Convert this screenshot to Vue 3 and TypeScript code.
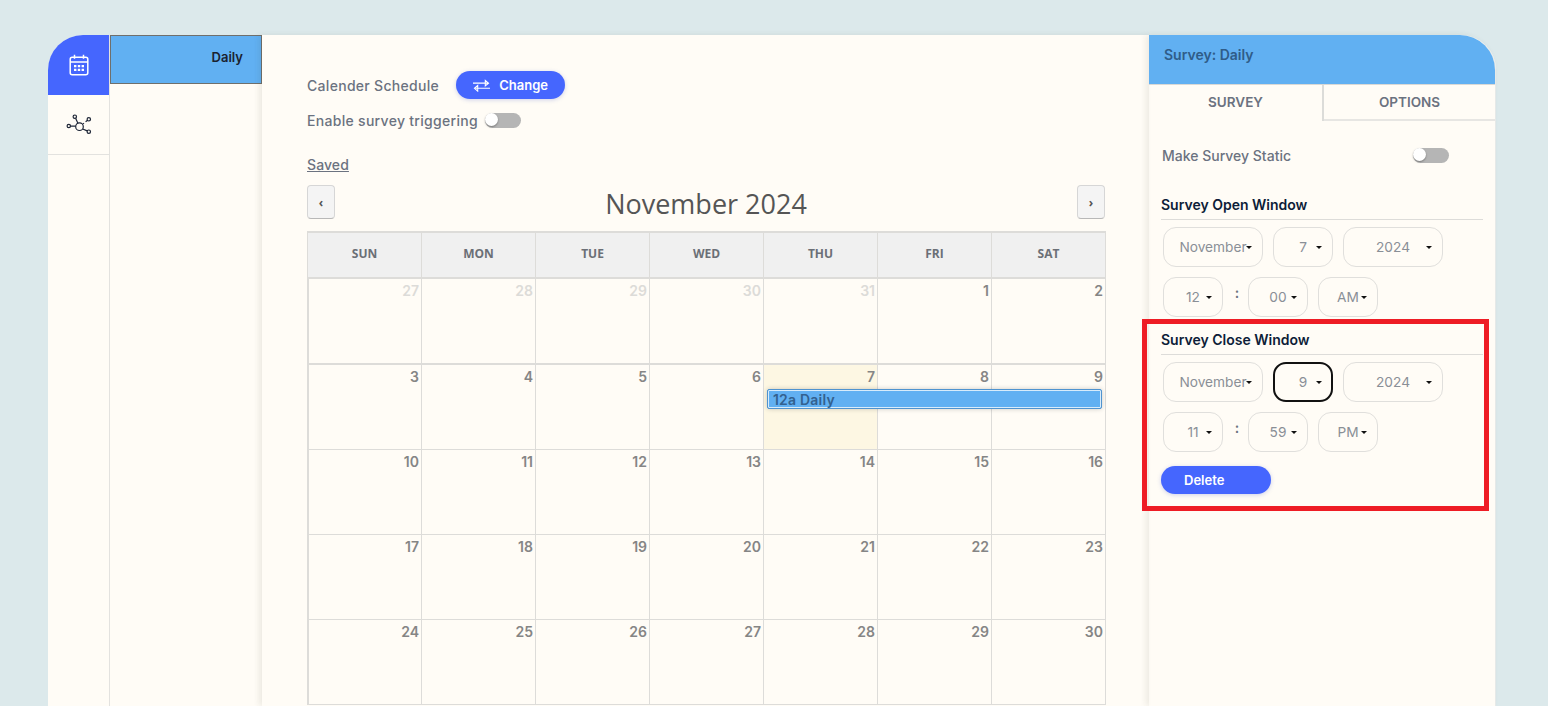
<script setup lang="ts">
const weekDays = ['SUN', 'MON', 'TUE', 'WED', 'THU', 'FRI', 'SAT']
interface Day { n: number; muted?: boolean; today?: boolean }
const first: Day[] = [27, 28, 29, 30, 31].map((n) => ({ n, muted: true }))
const rest: Day[] = Array.from({ length: 30 }, (_, i) => ({ n: i + 1, today: i + 1 === 7 }))
const days = [...first, ...rest]
const weeks: Day[][] = []
for (let i = 0; i < days.length; i += 7) weeks.push(days.slice(i, i + 7))

interface Win { title: string; date: { label: string; cls: string; focus?: boolean }[]; hour: string; minute: string; ampm: string }
const windows: Win[] = [
  { title: 'Survey Open Window', date: [{ label: 'November', cls: 'wide' }, { label: '7', cls: 'narrow' }, { label: '2024', cls: 'wide' }], hour: '12', minute: '00', ampm: 'AM' },
  { title: 'Survey Close Window', date: [{ label: 'November', cls: 'wide' }, { label: '9', cls: 'narrow', focus: true }, { label: '2024', cls: 'wide' }], hour: '11', minute: '59', ampm: 'PM' },
]
</script>

<template>
  <div class="page">
    <div class="shell">
      <nav class="rail">
        <div class="rail-item active">
          <svg width="20" height="22" viewBox="0 0 20 22" fill="none" stroke="#fff" stroke-width="1.5">
            <rect x="1.2" y="3.2" width="17.6" height="17.6" rx="2" />
            <path d="M1.2 8h17.6M5.5 .8v4M14.5 .8v4" />
            <path d="M5 11h2.4v2.2H5zM8.8 11h2.4v2.2H8.800zM12.600 11H15v2.200h-2.400zM5 14.800h2.400V17H5zM8.800 14.800h2.400V17H8.800zM12.600 14.800H15V17h-2.400z" fill="#fff" stroke="none" />
          </svg>
        </div>
        <div class="rail-item">
          <svg width="26" height="22" viewBox="0 0 26 22" fill="none" stroke="#1d2536" stroke-width="1.200">
            <circle cx="13.500" cy="12.700" r="3.800" />
            <circle cx="8.800" cy="2.700" r="1.700" />
            <circle cx="22.800" cy="5.300" r="1.700" />
            <circle cx="2.800" cy="12" r="1.700" />
            <circle cx="22.800" cy="17.700" r="1.700" />
            <path d="M9.600 4.300l2.300 5M4.600 12.100h5.100M16.600 15l4.700 1.900M17 9.900l1-.8M19.600 7.800l1.700-1.200" />
          </svg>
        </div>
      </nav>

      <aside class="list">
        <div class="list-item">Daily</div>
      </aside>

      <main class="main">
        <div class="line first-line">
          <span class="label">Calender Schedule</span>
          <button class="pill change">
            <svg width="17" height="13" viewBox="0 0 18 13" fill="none" stroke="#fff" stroke-width="1.100">
              <path d="M0 4h15.500M13 1v6l3.500-3zM18 9.500H2.500M5 6.500v6l-3.500-3z" />
            </svg>
            Change
          </button>
        </div>
        <div class="line second-line">
          <span class="label">Enable survey triggering</span>
          <span class="toggle"><i></i></span>
        </div>
        <a class="saved">Saved</a>

        <div class="cal-head">
          <button class="nav-btn">‹</button>
          <h2>November 2024</h2>
          <button class="nav-btn">›</button>
        </div>

        <div class="calendar">
          <div class="week-head">
            <div v-for="d in weekDays" :key="d" class="wd">{{ d }}</div>
          </div>
          <div v-for="(w, wi) in weeks" :key="wi" class="week" :class="{ thick: wi === 0 }">
            <div v-for="d in w" :key="d.n + (d.muted ? 'm' : '')" class="day" :class="{ today: d.today }">
              <span class="num" :class="{ muted: d.muted }">{{ d.n }}</span>
            </div>
            <div v-if="wi === 1" class="event"><span>12a Daily</span></div>
          </div>
        </div>
      </main>

      <section class="side">
        <header class="side-head">Survey: Daily</header>
        <div class="tabs">
          <div class="tab current">SURVEY</div>
          <div class="tab">OPTIONS</div>
        </div>
        <div class="side-body">
          <div class="static-row">
            <span class="label tight">Make Survey Static</span>
            <span class="toggle"><i></i></span>
          </div>
          <div v-for="win in windows" :key="win.title" class="window">
            <h3>{{ win.title }}</h3>
            <div class="sel-row">
              <div v-for="(s, i) in win.date" :key="i" class="sel" :class="[s.cls, { focus: s.focus }]">{{ s.label }}<b></b></div>
            </div>
            <div class="sel-row time">
              <div class="sel narrow">{{ win.hour }}<b></b></div>
              <span class="colon">:</span>
              <div class="sel narrow">{{ win.minute }}<b></b></div>
              <div class="sel narrow">{{ win.ampm }}<b></b></div>
            </div>
          </div>
          <button class="pill delete">Delete</button>
        </div>
        <div class="highlight"></div>
      </section>
    </div>
  </div>
</template>

<style>
html, body { margin: 0; background: #dce9eb; }
</style>

<style scoped>
.page {
  height: 706px;
  box-sizing: border-box;
  padding: 35px 52px 0 48px;
  overflow: hidden;
  background: #dce9eb;
  font-family: Inter, "Liberation Sans", sans-serif;
}
.shell {
  display: flex;
  height: 671px;
  background: #fffcf6;
  border-radius: 35px 35px 0 0;
}
.rail {
  width: 62px;
  flex: none;
  box-sizing: border-box;
  border-right: 1px solid #e3e2df;
}
.rail-item {
  height: 59px;
  display: flex;
  align-items: center;
  justify-content: center;
  border-bottom: 1px solid #e3e2df;
}
.rail-item.active {
  height: 60px;
  background: #4566fe;
  border-bottom: 0;
  border-top-left-radius: 35px;
}
.list {
  width: 152px;
  flex: none;
}
.list-item {
  height: 49px;
  box-sizing: border-box;
  border: 1px solid #6f6f6c;
  background: #61b0f2;
  padding: 13px 18px 0 0;
  text-align: right;
  font-size: 13px;
  font-weight: 600;
  line-height: 17px;
  color: #1a2230;
}
.main {
  width: 887px;
  flex: none;
  box-sizing: border-box;
  padding: 36px 43px 0 45px;
  box-shadow: -3px 0 6px rgba(60, 50, 30, 0.09);
  position: relative;
}
.line { display: flex; align-items: center; }
.first-line { height: 28px; gap: 17px; }
.second-line { height: 20px; margin-top: 11px; gap: 7px; }
.label {
  font-size: 14px;
  font-weight: 500;
  letter-spacing: 0.3px;
  color: #6b7280;
  white-space: nowrap;
}
.label.tight { letter-spacing: 0; }
.pill {
  border: 0;
  border-radius: 14px;
  height: 28px;
  background: #4566fe;
  color: #fff;
  font: 600 13px Inter, "Liberation Sans", sans-serif;
  box-shadow: 0 1px 4px rgba(60, 80, 200, 0.25);
}
.change {
  width: 109px;
  display: flex;
  align-items: center;
  justify-content: center;
  gap: 9px;
  padding: 0;
}
.toggle {
  position: relative;
  display: inline-block;
  width: 36px;
  height: 15px;
  border-radius: 8px;
  background: #b5b5b5;
  flex: none;
}
.toggle i {
  position: absolute;
  left: 0;
  top: 0;
  width: 13px;
  height: 13px;
  border-radius: 50%;
  background: #fff;
  box-shadow: 0 1px 2px rgba(0, 0, 0, 0.35);
}
.saved {
  display: block;
  width: max-content;
  margin-top: 26px;
  font-size: 14px;
  line-height: 18px;
  font-weight: 500;
  letter-spacing: 0.1px;
  color: #6b7280;
  text-decoration: underline;
}
.cal-head {
  display: flex;
  align-items: center;
  justify-content: space-between;
  margin-top: 11px;
  height: 34px;
  padding-right: 1px;
}
.cal-head h2 {
  margin: 0;
  padding-top: 2px;
  font: 400 27px "Open Sans", sans-serif;
  color: #555;
}
.nav-btn {
  width: 28px;
  height: 34px;
  padding: 0;
  border: 1px solid #d6d6d6;
  border-bottom-color: #b8b8b8;
  border-radius: 4px;
  background: #f4f4f4;
  color: #555;
  font: 700 12px "Open Sans", sans-serif;
}
.calendar {
  margin-top: 12px;
  width: 799px;
  box-sizing: border-box;
  border-left: 2px solid #dddcd9;
  border-right: 1px solid #dddcd9;
}
.week-head {
  display: grid;
  grid-template-columns: repeat(6, 114px) 113px;
  height: 48px;
  box-sizing: border-box;
  margin-left: -1px;
  border-top: 2px solid #dddcd9;
  border-bottom: 2px solid #dddcd9;
  background: #f0f0f0;
}
.wd {
  display: flex;
  align-items: center;
  justify-content: center;
  padding-bottom: 3px;
  font: 700 12px "Open Sans", sans-serif;
  color: #6b6f76;
  border-right: 1px solid #dddcd9;
}
.wd:last-child { border-right: 0; }
.week {
  position: relative;
  display: grid;
  grid-template-columns: 113px repeat(5, 114px) 113px;
  height: 85px;
  box-sizing: border-box;
  border-bottom: 1px solid #dddcd9;
}
.week.thick { height: 86px; border-bottom-width: 2px; }
.day {
  box-sizing: border-box;
  border-right: 1px solid #dddcd9;
  padding: 1px 2px 0 0;
  text-align: right;
}
.day:nth-child(7) { border-right: 0; }
.day.today { background: #fdf7e3; }
.num {
  font-size: 14px;
  line-height: 18px;
  font-weight: 600;
  color: #858585;
}
.num.muted { color: #dcdbd8; }
.event {
  position: absolute;
  left: 458px;
  top: 24px;
  width: 335px;
  height: 20px;
  box-sizing: border-box;
  border: 1px solid #4f93cf;
  border-radius: 2px;
  background: #61b0f2;
  box-shadow: inset 0 0 0 1px #d8ecfb, 0 0 5px rgba(0, 0, 0, 0.2);
  padding-left: 5px;
  font-size: 14px;
  letter-spacing: 0.2px;
  line-height: 20px;
  font-weight: 600;
  color: #33618f;
  overflow: hidden;
}
.side {
  position: relative;
  flex: 1;
  min-width: 0;
  border-radius: 0 35px 0 0;
  box-shadow: -3px 0 6px rgba(60, 50, 30, 0.09);
  border-right: 1px solid #e6e9e8;
}
.side-head {
  height: 49px;
  box-sizing: border-box;
  background: #61b0f2;
  border-radius: 0 35px 0 0;
  padding: 11px 15px 0;
  font-size: 14px;
  line-height: 17px;
  font-weight: 600;
  color: #2f5c88;
}
.tabs {
  display: flex;
  height: 37px;
  border-top: 1px solid #d9d9d6;
  box-sizing: border-box;
}
.tab {
  flex: 1;
  display: flex;
  align-items: center;
  justify-content: center;
  font-size: 13.500px;
  font-weight: 600;
  color: #6b7280;
  border-bottom: 2px solid #e7e6e3;
}
.tab.current {
  width: 173px;
  flex: none;
  border-bottom: 0;
  padding-bottom: 2px;
  border-right: 2px solid #dcdcd9;
}
.side-body { padding: 0 12px; }
.static-row {
  display: flex;
  align-items: center;
  justify-content: space-between;
  height: 20px;
  margin-top: 24px;
  padding: 0 34px 0 1px;
}
.window { margin-bottom: 14px; }
.static-row + .window { margin-top: 31px; }
.window h3 {
  margin: 0;
  font-size: 14px;
  line-height: 18px;
  font-weight: 600;
  color: #0d1d38;
}
.window h3::after {
  content: '';
  display: block;
  height: 1px;
  margin-top: 5px;
  background: #dddcd9;
}
.sel-row {
  display: flex;
  gap: 10px;
  margin: 7px 0 0 2px;
}
.sel-row.time { margin-top: 10px; gap: 0; }
.sel-row.time .sel + .sel { margin-left: 10px; }
.sel {
  position: relative;
  height: 40px;
  box-sizing: border-box;
  border: 1px solid #e0dfdc;
  border-radius: 13px;
  display: flex;
  align-items: center;
  justify-content: center;
  font-size: 13.700px;
  color: #8a8f96;
}
.sel.wide { width: 100px; }
.sel.narrow { width: 60px; }
.sel.focus { border: 2px solid #111; }
.sel b {
  position: absolute;
  right: 10px;
  top: 18px;
  border-left: 3px solid transparent;
  border-right: 3px solid transparent;
  border-top: 3px solid #111;
}
.sel.focus b { right: 9px; top: 17px; }
.colon {
  width: 25px;
  box-sizing: border-box;
  padding-left: 3px;
  text-align: center;
  font-size: 14px;
  font-weight: 600;
  color: #6b7280;
  line-height: 32px;
}
.delete {
  display: block;
  width: 110px;
  margin-top: 0;
  padding: 0 23px;
  text-align: left;
}
.highlight {
  position: absolute;
  left: -7px;
  top: 284px;
  width: 347px;
  height: 192px;
  box-sizing: border-box;
  border: 5px solid #ee1c25;
  pointer-events: none;
}
</style>
